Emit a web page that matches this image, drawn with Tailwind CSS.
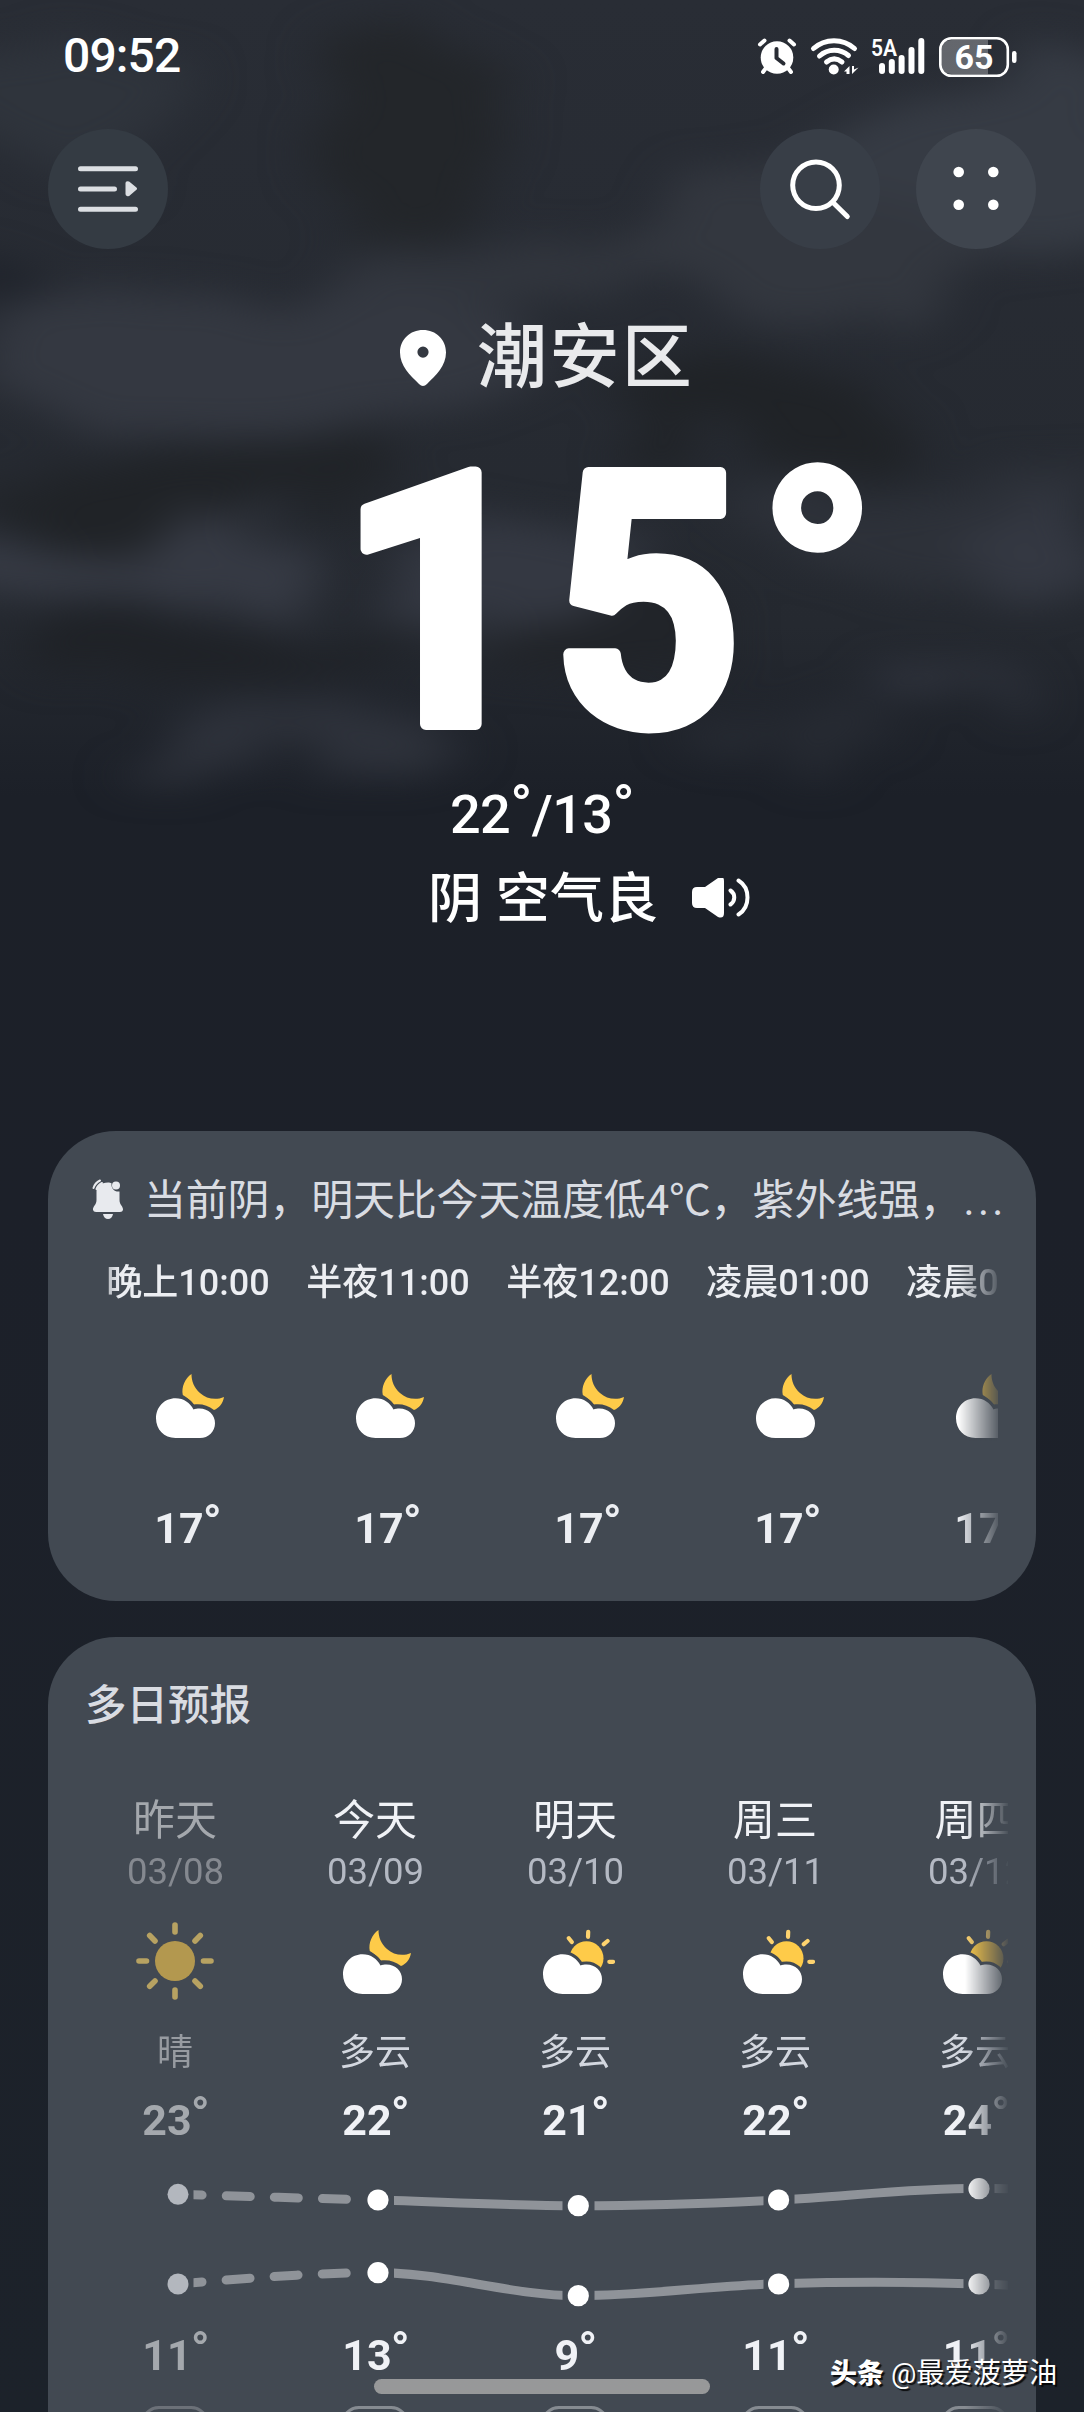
<!DOCTYPE html>
<html lang="zh-CN">
<head>
<meta charset="utf-8">
<title>天气</title>
<script src="https://cdn.jsdelivr.net/npm/@tailwindcss/browser@4"></script>
</head>
<body class="bg-[#1c2129]">
<!-- shared weather glyphs -->
<svg class="hidden">
  <symbol id="night" viewBox="-40 -40 80 80">
    <path fill="#fecb49" d="M3.500 -31C-3 -26.500 -6.800 -18 -5.200 -10C-1 -7.500 3 -4.500 5.800 -0.500C13 -1.500 20 0 26 5C31 3 35 -1.500 36 -8C28 -4.500 18.500 -6 12 -12C6 -17.500 3.500 -23.500 3.500 -31Z"/>
    <path fill="#fff" stroke="#424952" stroke-width="6" paint-order="stroke" d="M-12.500 -6.700C-4 -6.700 2 -2 5.500 4.500C7 3.800 9.500 3.500 11.500 3.500C20.500 3.500 27 10 27 18.200C27 26.500 20.500 33 12 33H-12.500C-24 33 -32 24.500 -32 13.300C-32 2 -23.500 -6.700 -12.500 -6.700Z"/>
  </symbol>
  <symbol id="day" viewBox="-40 -40 80 80">
    <circle cx="11.500" cy="-2.700" r="17" fill="#fecb49"/>
    <path stroke="#fdd36f" stroke-width="4.200" stroke-linecap="round" d="M13.200 -29.200L13 -24.200M-6.200 -22.800L-3.200 -19M28.800 -16.800L32.600 -20M34.300 0.800H38"/>
    <path fill="#fff" stroke="#424952" stroke-width="6" paint-order="stroke" d="M-12.500 -6.700C-4 -6.700 2 -2 5.500 4.500C7 3.800 9.500 3.500 11.500 3.500C20.500 3.500 27 10 27 18.200C27 26.500 20.500 33 12 33H-12.500C-24 33 -32 24.500 -32 13.300C-32 2 -23.500 -6.700 -12.500 -6.700Z"/>
  </symbol>
  <symbol id="sun" viewBox="-40 -40 80 80">
    <circle r="20" fill="#b3984f"/>
    <path stroke="#b7a262" stroke-width="5.600" stroke-linecap="round" d="M0 -36V-29M0 29V36M-36 0H-28.500M28.500 0H36M-25.300 -25.500L-20 -20M20 20L25.300 25.300M-25.300 25.300L-20 20M20 -20L25.300 -25.500"/>
  </symbol>
</svg>

<div class="relative isolate h-[2412px] w-[1084px] overflow-hidden bg-[#1c2129] font-[Roboto,'Noto_Sans_CJK_SC',sans-serif] text-white">
  <!-- night clouds -->
  <svg class="absolute inset-0 -z-10" width="1084" height="2412" viewBox="0 0 1084 2412">
    <defs>
      <linearGradient id="sky" x1="0" y1="0" x2="0" y2="1">
        <stop offset="0" stop-color="#292d35"/><stop offset=".26" stop-color="#252930"/><stop offset=".33" stop-color="#1c2028"/><stop offset=".5" stop-color="#1c2029"/><stop offset="1" stop-color="#1c222a"/>
      </linearGradient>
      <filter id="haze" x="-20%" y="-20%" width="140%" height="140%" color-interpolation-filters="sRGB">
        <feTurbulence type="fractalNoise" baseFrequency=".005 .011" numOctaves="5" seed="7" result="n"/>
        <feDisplacementMap in="SourceGraphic" in2="n" scale="150" xChannelSelector="R" yChannelSelector="G"/>
        <feGaussianBlur stdDeviation="24 17"/>
      </filter>
    </defs>
    <rect width="1084" height="2412" fill="url(#sky)"/>
    <g filter="url(#haze)">
      <ellipse cx="60" cy="90" rx="130" ry="70" fill="#2f343c"/>
      <ellipse cx="410" cy="130" rx="100" ry="90" fill="#23262a"/>
      <ellipse cx="260" cy="355" rx="280" ry="62" fill="#343841"/>
      <ellipse cx="480" cy="270" rx="160" ry="40" fill="#31353d"/>
      <ellipse cx="980" cy="165" rx="170" ry="80" fill="#363b44"/>
      <ellipse cx="800" cy="245" rx="190" ry="60" fill="#33373f"/>
      <ellipse cx="5" cy="285" rx="60" ry="34" fill="#1e222a"/>
      <ellipse cx="760" cy="415" rx="160" ry="48" fill="#202327"/>
      <ellipse cx="200" cy="490" rx="220" ry="44" fill="#202327"/>
      <ellipse cx="120" cy="565" rx="180" ry="36" fill="#363a44"/>
      <ellipse cx="525" cy="575" rx="130" ry="65" fill="#343842"/>
      <ellipse cx="920" cy="520" rx="180" ry="50" fill="#2d3139"/>
      <ellipse cx="1035" cy="565" rx="80" ry="30" fill="#343842"/>
      <ellipse cx="230" cy="650" rx="200" ry="26" fill="#1f2227"/>
      <ellipse cx="620" cy="650" rx="100" ry="34" fill="#212429"/>
      <ellipse cx="300" cy="735" rx="150" ry="26" fill="#2e323b"/>
      <ellipse cx="950" cy="692" rx="95" ry="24" fill="#31353f"/>
      <ellipse cx="790" cy="725" rx="80" ry="20" fill="#272b33"/>
    </g>
  </svg>

  <!-- status bar -->
  <div class="flex h-[112px] items-center justify-between pr-[64px] pl-[63px]">
    <span class="text-[48px] leading-none font-medium tracking-[-0.9px]">09:52</span>
    <svg width="264" height="48" viewBox="756 32 264 48" fill="none">
      <circle cx="777" cy="57.500" r="16.300" fill="#fff"/>
      <path stroke="#fff" stroke-width="4" stroke-linecap="round" d="M760 44.500L764.500 40.500M794 44.500L789.500 40.500M766 68L763 72M788 68L791 72"/>
      <path stroke="#282c34" stroke-width="4" stroke-linecap="round" stroke-linejoin="round" d="M776.500 49V58L783.500 63.500"/>
      <g stroke="#fff" stroke-width="5" stroke-linecap="round">
        <path d="M813.500 48.500C825 38 843 38 854.500 48.500M819.500 56C828 48.500 840 48.500 848.500 55.500M826.500 62C831.500 58 837 58 842 62"/>
      </g>
      <circle cx="833.700" cy="69.500" r="5" fill="#fff"/>
      <path fill="#fff" d="M849.500 66V74H846.500V71.500H844ZM852 74V66H854V69.500L858.500 67.500Z"/>
      <text x="871" y="55.500" font-size="23" font-weight="600" fill="#fff" textLength="26" lengthAdjust="spacingAndGlyphs">5A</text>
      <path stroke="#fff" stroke-width="6" stroke-linecap="round" d="M882 66V71M891.800 62V71M901.600 58V71M911.500 50V71M921.300 41V71"/>
      <path fill="#fff" fill-opacity=".28" d="M952 40H988V74H952Q941 74 941 63V51Q941 40 952 40Z"/>
      <rect x="940.300" y="38.300" width="67.500" height="37.500" rx="11" stroke="#fff" stroke-width="2.600"/>
      <rect x="1012" y="51" width="4.500" height="12" rx="2.200" fill="#fff"/>
      <text x="974" y="69" font-size="34" font-weight="700" fill="#fff" text-anchor="middle">65</text>
    </svg>
  </div>

  <!-- toolbar -->
  <div class="mt-[17px] flex h-[120px] px-12">
    <div class="size-[120px] rounded-full bg-[#343b43]">
      <svg width="120" height="120" viewBox="0 0 120 120" stroke="#dcdfe3" stroke-width="5" stroke-linecap="round">
        <path d="M32.500 39.700H87.500M32.500 60H66.500M32.500 80.300H87.500"/>
        <path fill="#dcdfe3" stroke-width="3" stroke-linejoin="round" d="M79 54Q79 53.500 80.500 54L87.500 59.700L80.500 65.500Q79 66 79 65Z"/>
      </svg>
    </div>
    <div class="ml-auto size-[120px] rounded-full bg-[#383e47]">
      <svg width="120" height="120" viewBox="0 0 120 120" fill="none" stroke="#fff" stroke-width="5" stroke-linecap="round">
        <circle cx="56" cy="56.200" r="23.300"/><path d="M73 73.500L87.300 87.500"/>
      </svg>
    </div>
    <div class="ml-9 size-[120px] rounded-full bg-[#3f454e]">
      <svg width="120" height="120" viewBox="0 0 120 120" fill="#fff">
        <circle cx="42.700" cy="43" r="5.300"/><circle cx="77.300" cy="43" r="5.300"/><circle cx="42.700" cy="75.700" r="5.300"/><circle cx="77.300" cy="75.700" r="5.300"/>
      </svg>
    </div>
  </div>

  <!-- current conditions -->
  <div class="mt-[59px] flex h-[100px] items-center pl-[400px]">
    <svg width="46" height="57" viewBox="0 0 46 57" fill="#fff"><path fill-rule="evenodd" d="M23 0C36 0 46 9.500 46 22.500C46 36 36 45 27 54Q23 58 19 54C10 45 0 36 0 22.500C0 9.500 10 0 23 0ZM23 16.500A5.600 5.600 0 1 0 23 27.700A5.600 5.600 0 1 0 23 16.500Z"/></svg>
    <span class="ml-[31px] text-[70px] leading-none font-medium tracking-[2.400px] text-[#e9eaec]">潮安区</span>
  </div>
  <svg class="block overflow-visible" width="1084" height="342" viewBox="0 408 1084 342" fill="#fff" stroke="#fff" stroke-width="12" stroke-linejoin="round" font-weight="700">
    <text x="337.500" y="724" font-size="353">1</text>
    <text x="552" y="724" font-size="353" textLength="190" lengthAdjust="spacingAndGlyphs">5</text>
    <text x="756" y="695" font-size="318" font-weight="600" stroke-width="7">°</text>
  </svg>
  <div class="mt-[25px] flex h-20 items-center justify-center text-[54px] leading-none font-medium tracking-[-0.6px]"><span>22<span class="align-[7px] text-[58px] leading-[0]">°</span>/13<span class="align-[7px] text-[58px] leading-[0]">°</span></span></div>
  <div class="mt-[5px] flex h-20 items-center pl-[428px]">
    <span class="text-[54px] leading-none font-medium tracking-[0.2px]">阴 空气良</span>
    <svg class="ml-[34px]" width="58" height="44" viewBox="0 2 58 44" fill="none" stroke="#fff" stroke-width="4" stroke-linecap="round"><path fill="#fff" stroke="none" d="M5 11H13L26 2Q32 -1 32 5V37Q32 43 26 41L13 32H5Q0 32 0 27V16Q0 11 5 11Z"/><path d="M38.500 14.500C43.500 18 43.500 25 38.500 28.500M46.500 4.500C58.500 12 58.500 31 46.500 38.500"/></svg>
  </div>

  <!-- hourly card -->
  <div class="mx-12 mt-[191px] h-[470px] rounded-[68px] bg-[#424952] pt-10">
    <div class="flex h-[60px] items-center pl-[44px] text-[42px] leading-none text-[#d9dce2]">
      <svg class="mb-1" width="32" height="40" viewBox="0 0 32 40" fill="#e8eaee"><path d="M16 3.500C17.500 3.500 18.500 3.700 19.500 4.200C19 9 22 13 27.500 12.500V21C27.500 26 31.500 27.500 31 31Q30.500 33 28 33H4Q1.500 33 1 31C.5 27.500 4.500 26 4.500 21V12C4.500 7 9 3.500 16 3.500Z"/><circle cx="24" cy="6.500" r="4"/><path d="M11 35H21Q20 40 16 40T11 35Z"/><path fill="none" stroke="#e8eaee" stroke-width="2" stroke-linecap="round" d="M1.500 9Q3 4 8 1.500M4.500 10Q6 6 10 4"/></svg>
      <span class="ml-[20px] tracking-[-0.2px] whitespace-nowrap">当前阴，明天比今天温度低4℃，紫外线强，</span>
      <span class="ml-[2px] tracking-[3.3px]">...</span>
    </div>
    <div class="ml-[38px] w-[912px] overflow-hidden [mask-image:linear-gradient(to_right,rgba(0,0,0,.2),#000_34px,#000_872px,rgba(0,0,0,.12))]">
      <div class="ml-[2px] grid w-[1000px] grid-cols-5 pt-[27px] text-center leading-[50px] text-[#eceef2]">
        <span class="text-[36px] font-medium">晚上10:00</span><span class="text-[36px] font-medium">半夜11:00</span><span class="text-[36px] font-medium">半夜12:00</span><span class="text-[36px] font-medium">凌晨01:00</span><span class="text-[36px] font-medium">凌晨02:00</span>
        <svg class="mx-auto mt-[57px] size-20"><use href="#night"/></svg><svg class="mx-auto mt-[57px] size-20"><use href="#night"/></svg><svg class="mx-auto mt-[57px] size-20"><use href="#night"/></svg><svg class="mx-auto mt-[57px] size-20"><use href="#night"/></svg><svg class="mx-auto mt-[57px] size-20"><use href="#night"/></svg>
        <span class="mt-[58px] h-[50px] text-[43px] font-bold">17<span class="-ml-px align-[4px] text-[49px] leading-[0]">°</span></span><span class="mt-[58px] h-[50px] text-[43px] font-bold">17<span class="-ml-px align-[4px] text-[49px] leading-[0]">°</span></span><span class="mt-[58px] h-[50px] text-[43px] font-bold">17<span class="-ml-px align-[4px] text-[49px] leading-[0]">°</span></span><span class="mt-[58px] h-[50px] text-[43px] font-bold">17<span class="-ml-px align-[4px] text-[49px] leading-[0]">°</span></span><span class="mt-[58px] h-[50px] text-[43px] font-bold">17<span class="-ml-px align-[4px] text-[49px] leading-[0]">°</span></span>
      </div>
    </div>
  </div>

  <!-- daily card -->
  <div class="mx-12 mt-9 h-[900px] rounded-[68px] bg-[#424952] pt-[39px]">
    <div class="flex h-[60px] items-center pl-[37px] text-[41.500px] leading-none font-medium text-[#d9dce2]">多日预报</div>
    <div class="ml-[27px] w-[933px] overflow-hidden [mask-image:linear-gradient(to_right,#000_890px,rgba(0,0,0,.05))]">
      <div class="grid w-[1000px] grid-cols-5 pt-[60px] text-center leading-[50px] text-[#f0f2f6]">
        <span class="text-[42px] text-[#a4a8ad]">昨天</span><span class="text-[42px]">今天</span><span class="text-[42px]">明天</span><span class="text-[42px]">周三</span><span class="pl-[3px] text-[42px]">周四</span>
        <span class="mt-px pl-px text-[36.500px] text-[#858990]">03/08</span><span class="mt-px pl-px text-[36.500px] text-[#b4b9c3]">03/09</span><span class="mt-px pl-px text-[36.500px] text-[#b4b9c3]">03/10</span><span class="mt-px pl-px text-[36.500px] text-[#b4b9c3]">03/11</span><span class="mt-px pl-[3px] text-[36.500px] text-[#b4b9c3]">03/12</span>
        <svg class="mx-auto mt-6 size-20"><use href="#sun"/></svg><svg class="mx-auto mt-6 size-20"><use href="#night"/></svg><svg class="mx-auto mt-6 size-20"><use href="#day"/></svg><svg class="mx-auto mt-6 size-20"><use href="#day"/></svg><svg class="mx-auto mt-6 size-20"><use href="#day"/></svg>
        <span class="mt-[27px] text-[36px] text-[#979ba1]">晴</span><span class="mt-[27px] text-[36px] text-[#d3d7df]">多云</span><span class="mt-[27px] text-[36px] text-[#d3d7df]">多云</span><span class="mt-[27px] text-[36px] text-[#d3d7df]">多云</span><span class="mt-[27px] text-[36px] text-[#d3d7df]">多云</span>
        <span class="mt-[17px] h-[50px] pl-[2px] text-[43px] font-bold text-[#a4a8ad]">23<span class="-ml-px align-[4px] text-[49px] leading-[0]">°</span></span><span class="mt-[17px] h-[50px] pl-[2px] text-[43px] font-bold">22<span class="-ml-px align-[4px] text-[49px] leading-[0]">°</span></span><span class="mt-[17px] h-[50px] pl-[2px] text-[43px] font-bold">21<span class="-ml-px align-[4px] text-[49px] leading-[0]">°</span></span><span class="mt-[17px] h-[50px] pl-[2px] text-[43px] font-bold">22<span class="-ml-px align-[4px] text-[49px] leading-[0]">°</span></span><span class="mt-[17px] h-[50px] pl-[3px] text-[43px] font-bold">24<span class="-ml-px align-[4px] text-[49px] leading-[0]">°</span></span>
      </div>
      <!-- high / low trend lines -->
      <svg class="mt-5 block" width="1000" height="150" viewBox="75 2165 1000 150" fill="none">
        <defs>
          <clipPath id="past"><rect x="193.500" y="2165" width="166" height="150"/></clipPath>
          <clipPath id="next"><path d="M394 2165H562.500V2315H394ZM594.500 2165H763.500V2315H594.500ZM794.500 2165H963.500V2315H794.500ZM994.500 2165H1075V2315H994.500Z"/></clipPath>
        </defs>
        <g stroke="#8f9399" stroke-width="9">
          <g clip-path="url(#past)" stroke-linecap="round" stroke-dasharray="24 24.200">
            <path d="M178 2194.300C245 2196.500 311 2198.300 378 2200"/>
            <path d="M178 2284C245 2278.500 311 2272.700 378 2272.700"/>
          </g>
          <g clip-path="url(#next)">
            <path d="M378 2200C445 2202 511 2205.700 577.500 2205.700C645 2205.700 711 2203.500 778.600 2200C845 2196.500 912 2188.200 979 2188.200C1010 2188.200 1040 2190 1075 2193"/>
            <path d="M378 2272.700C445 2272.700 511 2295.700 577.500 2295.700C645 2295.700 711 2285.500 778.600 2283.700C845 2281.800 912 2281.800 979 2284C1010 2285 1040 2287 1075 2289"/>
          </g>
        </g>
        <g fill="#b3b7be"><circle cx="178" cy="2194.300" r="10.500"/><circle cx="178" cy="2284" r="10.500"/></g>
        <g fill="#fff"><circle cx="378" cy="2200" r="10.600"/><circle cx="578.300" cy="2205.700" r="10.600"/><circle cx="778.600" cy="2200" r="10.600"/><circle cx="979" cy="2188.700" r="10.600"/><circle cx="378" cy="2272.700" r="10.600"/><circle cx="578.300" cy="2295.700" r="10.600"/><circle cx="778.600" cy="2284" r="10.600"/><circle cx="979" cy="2284" r="10.600"/></g>
      </svg>
      <div class="grid w-[1000px] grid-cols-5 pt-[15px] text-center text-[43px] leading-[50px] font-bold text-[#f0f2f6]">
        <span class="h-[50px] pl-[2px] text-[#a4a8ad]">11<span class="-ml-px align-[4px] text-[49px] leading-[0]">°</span></span><span class="h-[50px] pl-[2px]">13<span class="-ml-px align-[4px] text-[49px] leading-[0]">°</span></span><span class="h-[50px] pl-[2px]">9<span class="-ml-px align-[4px] text-[49px] leading-[0]">°</span></span><span class="h-[50px] pl-[2px]">11<span class="-ml-px align-[4px] text-[49px] leading-[0]">°</span></span><span class="h-[50px] pl-[3px]">11<span class="-ml-px align-[4px] text-[49px] leading-[0]">°</span></span>
        <div class="mx-auto mt-[26px] h-10 w-[68px] rounded-[18px] border-3 border-[#6c7178]"></div><div class="mx-auto mt-[26px] h-10 w-[68px] rounded-[18px] border-3 border-[#868b91]"></div><div class="mx-auto mt-[26px] h-10 w-[68px] rounded-[18px] border-3 border-[#868b91]"></div><div class="mx-auto mt-[26px] h-10 w-[68px] rounded-[18px] border-3 border-[#868b91]"></div><div class="mx-auto mt-[26px] h-10 w-[68px] rounded-[18px] border-3 border-[#868b91]"></div>
      </div>
    </div>
  </div>

  <!-- gesture bar and author tag -->
  <div class="absolute top-[2379px] left-[374px] h-[15px] w-[336px] rounded-full bg-[#979899]"></div>
  <div class="absolute top-[2354px] left-[830px] flex h-10 items-center whitespace-nowrap leading-none [text-shadow:2px_2px_1px_rgba(0,0,0,.85)]">
    <span class="text-[27px] font-black">头条</span><span class="ml-[7px] text-[28.200px]">@最爱菠萝油</span>
  </div>
</div>
</body>
</html>
